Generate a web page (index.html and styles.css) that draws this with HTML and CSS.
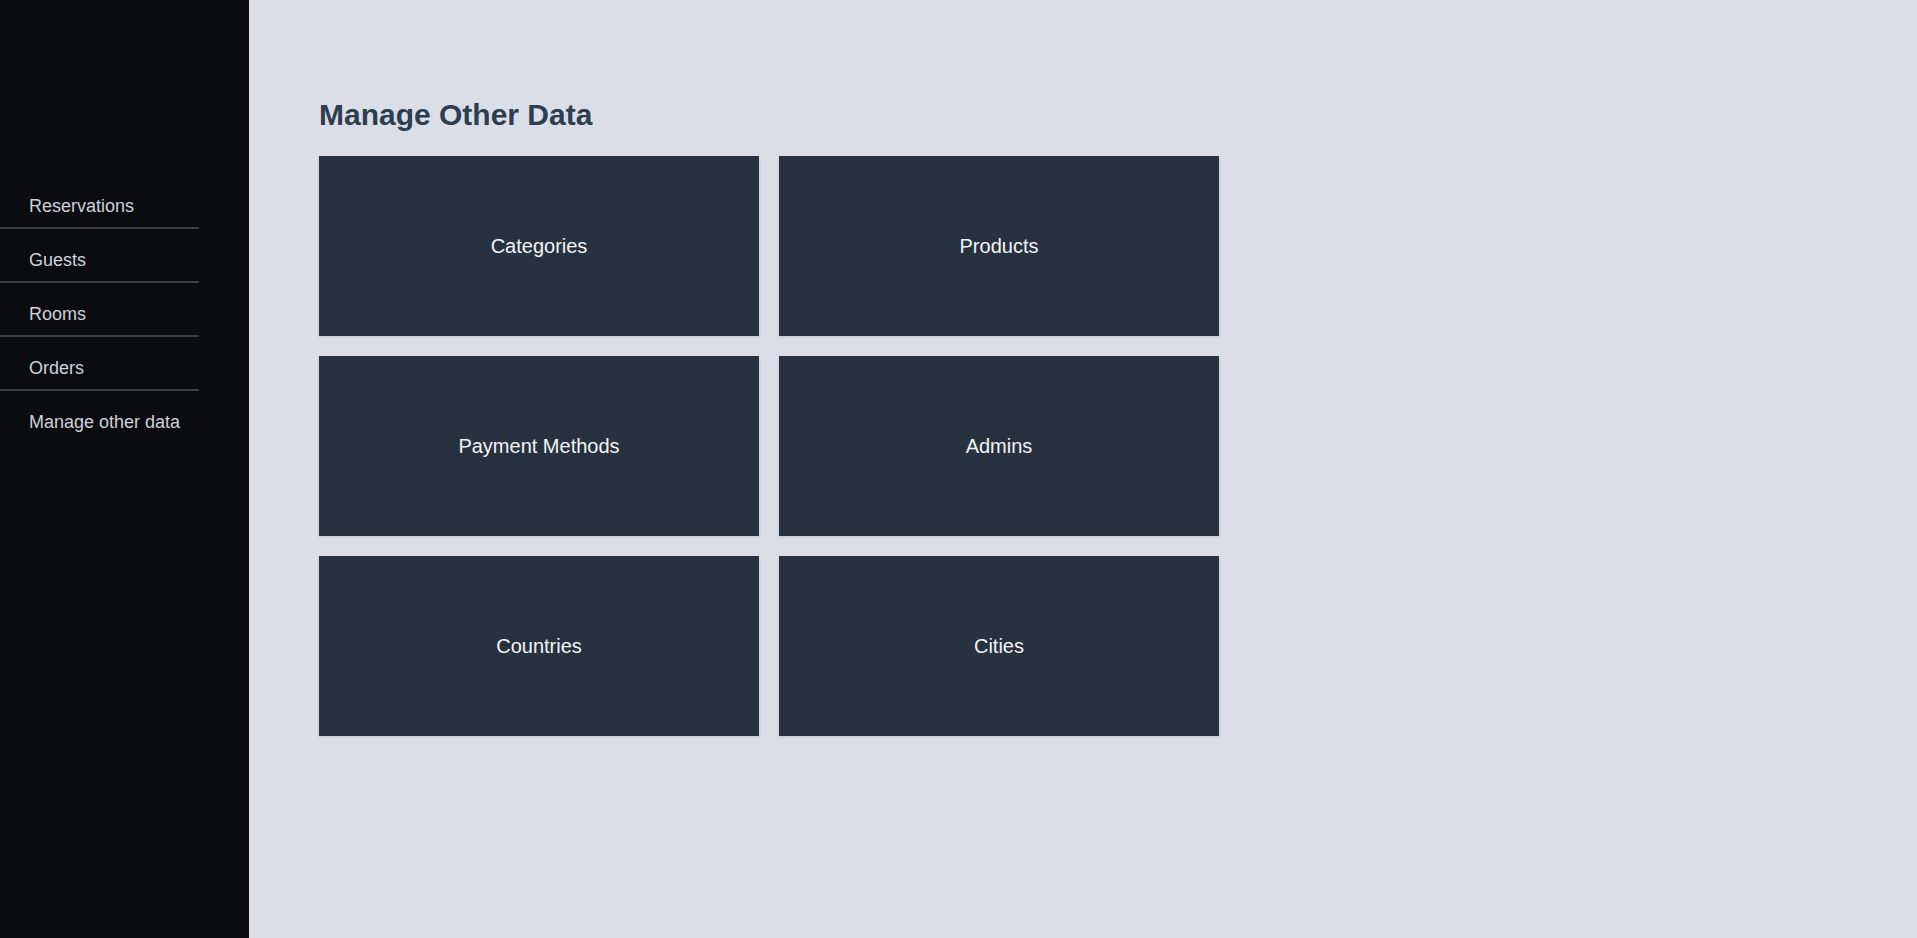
FILE: index.html
```html
<!DOCTYPE html>
<html lang="en">
<head>
<meta charset="utf-8">
<title>Manage Other Data</title>
<link rel="stylesheet" href="styles.css">
</head>
<body>
<div class="layout">
  <aside class="sidebar">
    <nav class="nav">
      <a class="nav-item" href="#">Reservations</a>
      <a class="nav-item" href="#">Guests</a>
      <a class="nav-item" href="#">Rooms</a>
      <a class="nav-item" href="#">Orders</a>
      <a class="nav-item last" href="#">Manage other data</a>
    </nav>
  </aside>
  <main class="main">
    <h1 class="title">Manage Other Data</h1>
    <div class="grid">
      <a class="card" href="#">Categories</a>
      <a class="card" href="#">Products</a>
      <a class="card" href="#">Payment Methods</a>
      <a class="card" href="#">Admins</a>
      <a class="card" href="#">Countries</a>
      <a class="card" href="#">Cities</a>
    </div>
  </main>
</div>
</body>
</html>
```
FILE: styles.css
```css
html, body {
  margin: 0;
  padding: 0;
  height: 100%;
}
body {
  font-family: "Liberation Sans", Arial, Helvetica, sans-serif;
  background: #dbdee7;
}
.layout {
  display: flex;
  min-height: 100vh;
}
.sidebar {
  width: 249px;
  flex: 0 0 249px;
  background: #0a0c10;
  padding-top: 175px;
  box-sizing: border-box;
}
.nav {
  display: flex;
  flex-direction: column;
  width: 199px;
}
.nav-item {
  display: block;
  color: #cdd1d9;
  text-decoration: none;
  font-size: 18px;
  line-height: 20px;
  padding: 21px 0 11px 29px;
  border-bottom: 2px solid #3b3e47;
}
.nav-item.last {
  border-bottom: none;
}
.main {
  flex: 1;
  padding: 98px 0 0 70px;
}
.title {
  margin: 0 0 24px;
  font-size: 30px;
  line-height: 34px;
  font-weight: bold;
  color: #2c3e50;
}
.grid {
  display: grid;
  grid-template-columns: 440px 440px;
  grid-auto-rows: 180px;
  gap: 20px;
}
.card {
  display: flex;
  align-items: center;
  justify-content: center;
  background: #28313f;
  color: #f2f4f7;
  font-size: 20px;
  text-decoration: none;
  box-shadow: 0 1px 3px rgba(0, 0, 0, 0.12);
}
```
